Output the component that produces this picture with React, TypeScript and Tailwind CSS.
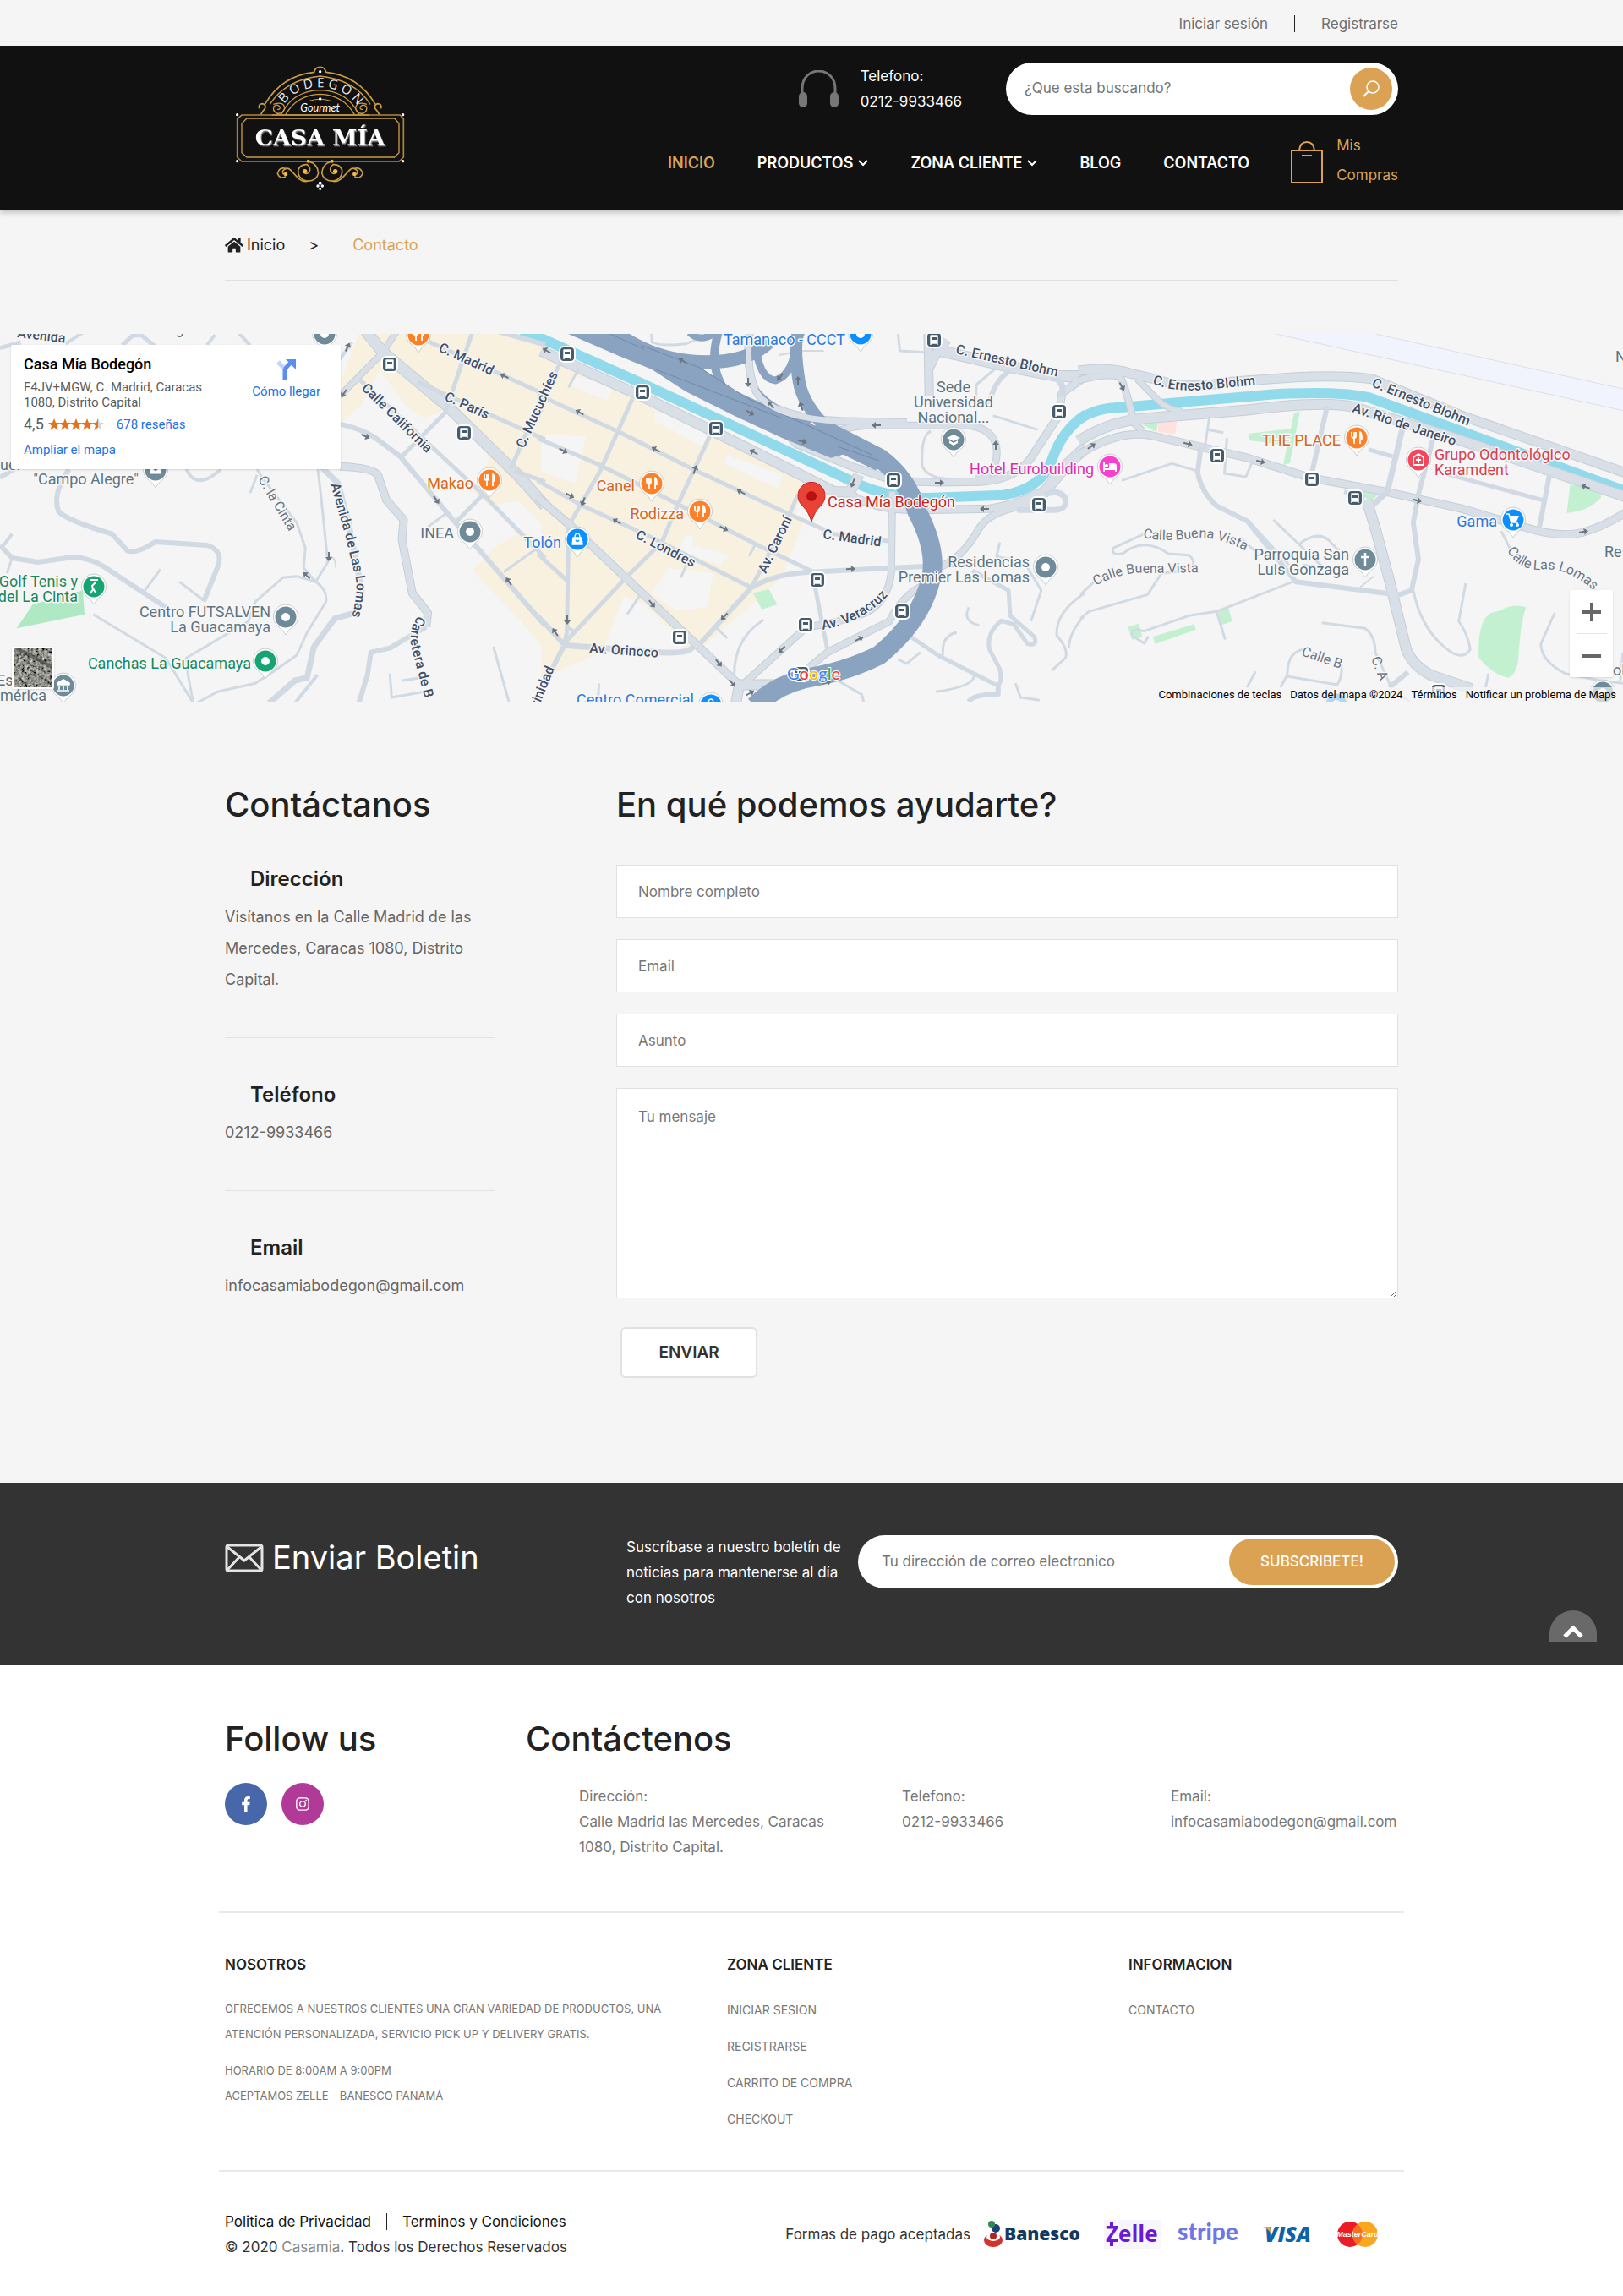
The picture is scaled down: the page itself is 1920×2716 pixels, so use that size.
import React from "react";
import { FaHome, FaFacebookF, FaInstagram } from "react-icons/fa";

/* ---------- Map data: three side-by-side tiles, each 1568 x 1350 units ---------- */

type Road = [width: number, d: string];

const tiles: {
  x: number;
  blocks: string[];
  clear: string[];
  parks: string[];
  roads: Road[];
}[] = [
  {
    x: 0,
    blocks: [
      "M1040,30H1568V520L1490,510L1420,470L1320,400L1180,290L1100,160L1050,280L990,345V190Z",
      "M1420,470L1568,520V1130L1480,1010L1370,870L1430,790L1500,740L1440,660L1370,590Z",
    ],
    clear: ["M1230,330L1290,300L1420,450L1380,500Z", "M1430,640L1500,620L1568,700V760L1500,720Z"],
    parks: ["M95,990L240,940L245,1025L48,1075Z"],
    roads: [
      [14, "M1060,20L1110,95L1300,290L1500,530L1580,640"],
      [8, "M1150,20L1110,95L985,250"],
      [5, "M1370,20L1290,310L1160,470"],
      [6, "M985,350Q1060,370 1100,410L1160,465L1320,700L1580,1065"],
      [5, "M1040,190L1400,600L1580,825"],
      [5, "M1210,200L1580,405"],
      [5, "M1230,50L1580,245"],
      [5, "M1580,230L1480,510"],
      [6, "M1440,20L1580,68"],
      [5, "M1400,600L1320,700"],
      [3, "M1290,670L1240,715"],
      [3, "M1580,770L1460,875"],
      [5, "M1490,515L1580,555"],
      [10, "M985,500Q1080,505 1095,530L1120,620L1170,690L1165,760L1195,950L1240,1020L1235,1070"],
      [6, "M1235,1070L1185,1105L1130,1145L1075,1160L1065,1240L1040,1340"],
      [7, "M930,500L980,560L1010,700L1050,950L1030,1020L970,1040L910,1140L890,1250L855,1260L780,1340"],
      [4, "M920,1240L855,1340"],
      [3, "M920,500L930,600L950,840L915,910L860,890L820,895L740,980L720,1050L540,1180L545,1240L560,1340"],
      [3, "M915,910Q950,940 945,980L890,1090L860,1170L790,1230L740,1270L630,1300L570,1340"],
      [3, "M740,500L760,540L860,700L885,790L880,860L915,910"],
      [3, "M745,530L725,595"],
      [4, "M540,510Q570,590 640,510"],
      [2, "M950,820Q975,820 973,860"],
      [6, "M200,510Q150,600 170,660Q190,690 325,740L370,800Q400,810 450,768L600,780Q650,800 630,860L590,980"],
      [6, "M0,780L35,825L110,840L210,822Q260,825 300,855L480,1000"],
      [4, "M35,740L10,780"],
      [3, "M35,825L20,880"],
      [3, "M465,865L420,940"],
      [3, "M520,910L590,975"],
      [3, "M270,1025L480,1180L560,1340"],
      [3, "M1430,1140L1475,1335"],
      [3, "M1130,1235L1135,1320L1230,1300"],
      [3, "M1165,1260L1220,1250"],
      [5, "M0,80L60,60"],
      [4, "M190,65L240,25"],
      [5, "M355,70L385,35L410,35L450,75"],
      [4, "M600,70L625,30M690,25L725,70"],
      [4, "M1020,60L985,120"],
      [6, "M0,540L40,510"],
    ],
  },
  {
    x: 640,
    blocks: ["M0,60L60,120L250,250L500,390L770,560L730,680L760,700L700,890L620,980L470,1140L180,1160L60,1220L0,1260Z"],
    clear: [
      "M20,385L130,395L100,560L0,520V420Z",
      "M100,180L210,215L190,265L90,215Z",
      "M330,300L480,385L470,430L330,340Z",
      "M540,460L700,530L690,580L530,490Z",
      "M420,740L440,750L440,780L545,815L520,850L400,800Z",
      "M370,860L500,880L480,1000L390,1010L320,950Z",
      "M240,960L300,990L420,1130L400,1150H180Z",
    ],
    parks: ["M615,950L660,935L685,990L640,1008Z"],
    roads: [
      [10, "M605,20Q590,200 640,260Q700,330 870,340L1060,345"],
      [9, "M850,380Q900,355 960,355H1240Q1330,370 1320,470Q1310,540 1260,545"],
      [13, "M0,90L290,250L540,400L850,590H880Q900,600 920,530"],
      [10, "M900,600Q960,655 1100,655L1300,650Q1400,630 1440,590"],
      [10, "M670,330L740,420L900,500L1010,545Q1080,560 1230,555Q1370,560 1420,470L1500,320L1510,240L1568,190"],
      [11, "M1122,20L1125,250"],
      [12, "M1175,50L1140,110L1125,150"],
      [14, "M1140,85L1370,150L1500,180L1580,180"],
      [6, "M1360,160Q1310,200 1300,280"],
      [7, "M1480,180Q1520,200 1510,250"],
      [3, "M1320,150L1262,210L1260,290"],
      [3, "M1035,30L1040,90L1110,95"],
      [2, "M690,105L760,90H820"],
      [3, "M320,30L322,60Q350,75 420,65L490,30"],
      [3, "M1130,375Q1100,390 1105,500Q1120,540 1180,545"],
      [3, "M1310,320L1440,370"],
      [5, "M265,260L170,520L85,700"],
      [5, "M490,390L395,640L350,770L250,890L65,1130"],
      [5, "M745,600L720,670L610,930"],
      [5, "M60,125L40,170L-10,330"],
      [5, "M-10,245L230,380L440,510L720,670L850,740L1005,765"],
      [5, "M-10,400L170,495L390,630L620,775L790,875"],
      [5, "M-10,550L120,640L300,740L610,930"],
      [10, "M-10,610L85,710L250,900L440,1120L570,1270"],
      [6, "M610,930Q680,880 780,875L1200,850"],
      [6, "M610,930L460,1130"],
      [7, "M440,1140Q430,1165 350,1160L65,1135"],
      [5, "M80,720L75,1090L65,1140"],
      [6, "M65,1140L-10,1320"],
      [4, "M75,1070L95,1085L65,1140"],
      [5, "M-10,810L75,905"],
      [6, "M-10,1030L65,1130"],
      [5, "M785,870L830,1150"],
      [9, "M1018,590L1015,880Q1005,980 940,1020Q850,1060 770,1070L580,1280"],
      [9, "M1150,900Q1050,940 1010,1050L830,1160L770,1220"],
      [13, "M565,1340L575,1275L700,1275"],
      [9, "M1150,860Q1220,830 1270,720Q1300,660 1400,640"],
      [14, "M1390,640L1460,590L1520,500L1580,430"],
      [7, "M1380,655H1490Q1530,650 1518,610Q1500,580 1460,600"],
      [5, "M1030,1070L1150,1170L1310,1270Q1340,1290 1330,1220L1300,1150Q1290,1090 1335,1048L1370,1060L1410,1130Q1440,1140 1430,1105L1360,1030L1355,940L1250,870"],
      [6, "M1240,1335Q1250,1310 1325,1308L1325,1270"],
      [3, "M1330,770L1320,820L1400,840L1450,940L1420,1050"],
      [3, "M1240,1000Q1220,1050 1270,1065"],
      [3, "M1205,1090Q1160,1100 1165,1170"],
      [3, "M1575,950Q1490,1020 1495,1100Q1530,1150 1520,1180L1480,1225"],
      [3, "M1530,1145Q1530,1090 1575,1030"],
      [3, "M1100,1160L1060,1200L1035,1185"],
      [3, "M1255,1240Q1260,1280 1145,1300"],
      [3, "M860,1260L930,1310L935,1335"],
      [3, "M1375,1270L1390,1320L1445,1330"],
      [3, "M645,1045Q560,1110 560,1240"],
      [3, "M285,960L250,1025"],
      [3, "M510,1075L540,1110"],
      [3, "M425,840L405,895"],
      [3, "M620,780L603,818"],
      [3, "M110,150L80,220"],
      [3, "M168,1270L165,1335"],
    ],
  },
  {
    x: 1280,
    blocks: [],
    clear: [],
    parks: [
      "M485,383L610,366L598,425L485,408Z",
      "M615,310L632,306L602,490L583,495Z",
      "M175,352L220,345L215,378Z",
      "M805,583L865,595L832,628Z",
      "M1415,565Q1500,580 1505,610Q1470,660 1405,665Z",
      "M395,1010L425,1003L435,1050L400,1065Z",
      "M205,1105L325,1060L330,1080L212,1130Z",
      "M133,1070L165,1058L175,1105L145,1115Z",
      "M1215,1010Q1250,985 1287,1000Q1270,1060 1265,1180Q1260,1240 1235,1250Q1190,1240 1150,1180Q1145,1050 1185,1020Z",
    ],
    roads: [
      [12, "M-10,160Q80,145 140,170L210,190Q300,230 430,200L620,184Q750,175 840,190L1100,320L1580,525"],
      [9, "M-10,195Q60,170 110,180Q130,230 150,345L175,375"],
      [8, "M160,190L220,265Q250,300 290,305"],
      [13, "M-10,410Q80,340 180,330L480,300Q700,265 790,290L1080,400L1580,610"],
      [10, "M-10,460Q100,370 200,390L480,470L660,540L880,590L1100,650L1280,715Q1380,755 1450,735Q1520,710 1580,660"],
      [6, "M345,430L335,520Q345,590 390,640L480,695L620,910L880,950L920,955L955,940L975,830L960,700L975,600L1018,400"],
      [6, "M710,290L665,530"],
      [7, "M930,360L885,590L840,640"],
      [5, "M760,590L820,610"],
      [5, "M830,440L900,465"],
      [5, "M1020,515L1335,620"],
      [6, "M1355,530L1325,720"],
      [13, "M825,620L850,720L890,900L940,1150Q960,1210 1010,1240L1130,1290"],
      [3, "M960,940Q980,1060 1040,1130Q1100,1200 1125,1150Q1120,1100 1092,1050L1112,915"],
      [3, "M370,320L355,440M365,370L410,380"],
      [3, "M420,400L413,525L475,537L495,480"],
      [3, "M115,550L260,490L330,515"],
      [3, "M610,910L390,1015L310,1030L180,1085Q140,1070 145,1100L180,1128L193,1103"],
      [3, "M390,1015L415,1115"],
      [3, "M555,690L700,860L640,850"],
      [3, "M480,690L600,850"],
      [3, "M630,775Q690,720 725,775L745,800"],
      [3, "M180,740L90,790Q85,820 120,808Q180,750 250,810L310,815Q340,850 300,870L230,880L190,955L20,1015L-5,1040"],
      [3, "M460,755L510,810M-5,955L35,910"],
      [3, "M695,1055L820,1075Q850,1100 850,1160L895,1280"],
      [6, "M945,1230L890,1285"],
      [3, "M640,1150Q595,1160 595,1240L575,1285M595,1245L740,1275Q758,1240 750,1190"],
      [3, "M503,1228L478,1285"],
      [3, "M1370,1020L1330,1130Q1330,1190 1400,1235L1500,1260L1568,1270M1568,1160L1560,1260"],
      [3, "M1215,730L1240,790M1475,905L1487,945"],
      [2, "M845,890L805,930"],
      [3, "M1178,1235L1170,1285"],
      [3, "M930,1320L950,1335"],
    ],
  },
];

const water = [
  { x: 640, d: "M-60,25L0,45L300,210L900,552Q1000,612 1120,612L1340,602Q1450,580 1480,480Q1510,370 1580,315" },
  { x: 1280, d: "M-10,335Q40,290 120,290L560,244Q740,232 830,255L1580,590" },
];

const highways: Road[] = [
  [23, "M820,370L980,470Q1060,540 1090,660Q1150,800 1130,900Q1100,1050 980,1170Q900,1220 800,1245Q690,1265 620,1350"],
  [18, "M420,195L620,305L820,395L980,490"],
  [16, "M210,20Q330,130 480,130Q600,130 660,60"],
  [8, "M430,25Q460,60 500,30"],
  [10, "M515,20Q490,120 515,190Q540,270 640,340"],
  [15, "M748,20Q730,60 748,200Q760,290 850,390"],
  [9, "M622,60Q630,190 680,195Q720,180 735,100"],
  [7, "M620,225Q680,310 780,350"],
];

type Pin = [x: number, y: number, color: string, glyph: string];
const SLATE = "#6f8a98";
const ORANGE = "#ff8127";
const GREEN = "#16a571";
const BLUE = "#0d90ff";
const pins: Pin[] = [
  [184, 161, SLATE, "mail"],
  [384, 0, SLATE, "dot"],
  [495, 1, ORANGE, "food"],
  [579, 173, ORANGE, "food"],
  [556, 234, SLATE, "dot"],
  [111, 299, GREEN, "golf"],
  [338, 335, SLATE, "dot"],
  [314, 387, GREEN, "dot"],
  [75, 416, SLATE, "museum"],
  [771, 177, ORANGE, "food"],
  [828, 210, ORANGE, "food"],
  [683, 243, BLUE, "bag"],
  [1128, 125, SLATE, "school"],
  [1237, 276, SLATE, "dot"],
  [1018, 0, BLUE, "dot"],
  [841, 439, BLUE, "bag"],
  [1313, 157, "#fb3fd0", "bed"],
  [1605, 123, ORANGE, "food"],
  [1678, 149, "#f4475b", "clinic"],
  [1790, 220, BLUE, "cart"],
  [1615, 267, SLATE, "cross"],
  [1896, 424, SLATE, "dot"],
  [1581, 438, BLUE, "dot"],
];

const glyphs: Record<string, React.ReactNode> = {
  dot: <circle r="5" fill="#fff" />,
  food: <path d="M-6,-7V-2Q-6,0 -3,0Q-1,0 -1,-2V-7M-3,-7V7M4,7V-7Q6,-6 6,1H4" stroke="#fff" strokeWidth="1.8" fill="none" />,
  bag: (
    <g stroke="#fff" strokeWidth="1.4">
      <path d="M-5,-2H5L6,6H-6Z" fill="#fff" />
      <path d="M-3,-2Q-3,-7 0,-7Q3,-7 3,-2" fill="none" />
      <path d="M-2,1Q0,4 2,1" fill="none" stroke={BLUE} />
    </g>
  ),
  mail: <path d="M-7,-5H7V5H-7ZM-7,-5L0,1L7,-5" stroke={SLATE} strokeWidth="1" fill="#fff" />,
  golf: <path d="M-4,-8H5M2,-5L-2,-1L-1,3L-4,8M-1,2L2,7M5,7V8" stroke="#fff" strokeWidth="2" fill="none" />,
  museum: <path d="M0,-7L7,-3V-1H-7V-3ZM-5,0V5M0,0V5M5,0V5M-7,6H7" stroke="#fff" strokeWidth="1.6" fill="#fff" />,
  school: <path d="M0,-6L8,-2L0,2L-8,-2ZM-5,1V4L0,7L5,4V1L0,4Z" fill="#fff" />,
  bed: (
    <g>
      <path d="M-7,-6V6M-7,3H7M7,6V0" stroke="#fff" strokeWidth="2" fill="none" />
      <path d="M-1,-4H5Q8,-4 8,0V2H-1Z" fill="#fff" />
      <circle cx="-4" cy="-1" r="2" fill="#fff" />
    </g>
  ),
  clinic: <path d="M-6,6V-3L0,-7L6,-3V6ZM0,-3V4M-3,0H3" stroke="#fff" strokeWidth="1.8" fill="none" />,
  cart: (
    <g fill="#fff">
      <path d="M-5,-5H7L4,2H-3Z" />
      <path d="M-8,-7H-5L-2,3H6" fill="none" stroke="#fff" strokeWidth="1.6" />
      <circle cx="-2" cy="6" r="2" />
      <circle cx="5" cy="6" r="2" />
    </g>
  ),
  cross: <path d="M0,-8V8M-5,-3H5" stroke="#fff" strokeWidth="2.4" fill="none" />,
};

const stops: [number, number][] = [
  [461, 36], [549, 117], [671, 24], [760, 69], [847, 112], [1105, 7], [1253, 92], [1057, 173],
  [1229, 202], [967, 291], [953, 344], [1067, 328], [804, 359], [948, 402], [1440, 144],
  [1552, 172], [1603, 194], [1702, 423],
];

const arrows: [number, number, number][] = [
  [411, 16, -65], [407, 70, 125], [432, 121, 25], [516, 196, 55], [389, 263, 90], [363, 286, -135], [597, 50, -155], [602, 293, -125],
  [647, 20, -150], [686, 93, -150], [666, 138, 28], [776, 137, -150], [674, 191, 28], [690, 198, 110], [822, 161, -70], [730, 222, -150],
  [877, 187, -150], [856, 230, 28], [892, 140, -150], [771, 319, 50], [671, 338, 90], [657, 353, -125], [850, 389, 50], [866, 413, 50],
  [857, 334, 135], [925, 373, 135], [1016, 361, -25], [1006, 278, -3], [808, 32, -150], [887, 93, 30], [885, 57, 90], [923, 51, 130],
  [944, 56, -90], [912, 84, -130], [948, 86, -110], [949, 127, 15], [1037, 108, 180], [1178, 132, -90], [1111, 176, 0], [1165, 207, 180],
  [1009, 176, 110], [1327, 62, 60], [1291, 133, -35], [1405, 130, 15], [1491, 151, 15], [1676, 197, 15], [1876, 181, -160], [1873, 234, -10],
  [887, 425, -30], [978, 412, -20],
];

type Label = [x: number, y: number, anchor: "start" | "middle" | "end", color: string, text: string];
const G = "#5c7482";
const labels: Label[] = [
  [363, 0, "end", G, "Colegio Mater Salvatore"],
  [0, 161, "start", G, "ue."],
  [164, 178, "end", G, "\"Campo Alegre\""],
  [560, 183, "end", "#d8661b", "Makao"],
  [537, 242, "end", G, "INEA"],
  [92, 299, "end", "#168a5c", "Golf Tenis y"],
  [92, 317, "end", "#168a5c", "del La Cinta"],
  [320, 335, "end", G, "Centro FUTSALVEN"],
  [320, 353, "end", G, "La Guacamaya"],
  [297, 396, "end", "#168a5c", "Canchas La Guacamaya"],
  [-4, 416, "start", G, "Es"],
  [55, 434, "end", G, "América"],
  [664, 253, "end", "#2c78dd", "Tolón"],
  [751, 186, "end", "#d8661b", "Canel"],
  [809, 219, "end", "#d8661b", "Rodizza"],
  [1000, 13, "end", "#2c78dd", "Tamanaco - CCCT"],
  [821, 439, "end", "#2c78dd", "Centro Comercial"],
  [1128, 69, "middle", G, "Sede"],
  [1128, 87, "middle", G, "Universidad"],
  [1128, 105, "middle", G, "Nacional..."],
  [1218, 276, "end", G, "Residencias"],
  [1218, 294, "end", G, "Premier Las Lomas"],
  [1294, 166, "end", "#dd2bb0", "Hotel Eurobuilding"],
  [1586, 132, "end", "#d8661b", "THE PLACE"],
  [1697, 149, "start", "#dc3c50", "Grupo Odontológico"],
  [1697, 167, "start", "#dc3c50", "Karamdent"],
  [1771, 228, "end", "#2c78dd", "Gama"],
  [1596, 267, "end", G, "Parroquia San"],
  [1596, 285, "end", G, "Luis Gonzaga"],
  [1911, 33, "start", G, "N"],
  [1898, 264, "start", G, "Res"],
  [1908, 404, "start", G, "ol"],
];

const streets: [id: string, d: string, text: string, minor?: boolean][] = [
  ["s1", "M518,20L600,58", "C. Madrid"],
  ["s2", "M525,78L600,112", "C. París"],
  ["s3", "M427,65L530,166", "Calle California"],
  ["s4", "M620,136L668,30", "C. Mucuchíes"],
  ["s5", "M305,172L352,250", "C. la Cinta", true],
  ["s6", "M391,178L408,237L421,290Q424,310 412,350", "Avenida de Las Lomas"],
  ["s7", "M495,333Q482,350 487,372L510,460", "Carretera de B"],
  ["s8", "M634,450L668,365", "Trinidad"],
  ["s9", "M751,241L830,282", "C. Londres"],
  ["s10", "M906,284L945,202", "Av. Caroní"],
  ["s11", "M973,242L1060,254", "C. Madrid"],
  ["s12", "M973,350Q1030,340 1062,295", "Av. Veracruz"],
  ["s13", "M697,377L800,384", "Av. Orinoco"],
  ["s14", "M1130,23L1270,55", "C. Ernesto Blohm"],
  ["s15", "M1363,59Q1390,69 1425,66L1510,58", "C. Ernesto Blohm"],
  ["s16", "M1622,62L1760,118", "C. Ernesto Blohm"],
  ["s17", "M1599,92L1750,142", "Av. Río de Janeiro"],
  ["s18", "M1352,241Q1380,247 1415,241Q1445,240 1480,260", "Calle Buena Vista", true],
  ["s19", "M1296,298Q1330,280 1360,283L1430,282", "Calle Buena Vista", true],
  ["s20", "M1783,256Q1795,278 1820,279Q1855,274 1890,308", "Calle Las Lomas", true],
  ["s21", "M1539,380L1600,401", "Calle B", true],
  ["s22", "M1622,384L1640,430", "C. A", true],
  ["s23", "M20,4L90,12", "Avenida"],
];

const tileTransform = (x: number) => `translate(${x},-10) scale(0.40816,0.33333)`;

function StreetMap() {
  return (
    <svg
      role="img"
      aria-label="Mapa de Caracas"
      viewBox="0 0 1920 435"
      preserveAspectRatio="xMidYMid slice"
      className="h-full w-full font-['Roboto',sans-serif]"
      fill="none"
      strokeLinejoin="round"
    >
      {tiles.map((t) => (
        <g key={t.x} transform={tileTransform(t.x)}>
          {t.blocks.map((d) => <path key={d} d={d} fill="#f8f1df" />)}
          {t.clear.map((d) => <path key={d} d={d} fill="#f5f5f5" />)}
          {t.parks.map((d) => <path key={d} d={d} fill={t.x ? "#c4f0d2" : "#aee9c3"} />)}
        </g>
      ))}
      <g transform={tileTransform(1280)}>
        <path d="M560,30H850L1568,225V302Z" fill="#f2f4fd" />
        <path d="M560,30L1568,302M850,30L1568,225" stroke="#dddfe8" strokeWidth="1" vectorEffect="non-scaling-stroke" />
        <path d="M220,345L275,340L270,385L220,378Z" fill="#ffe2de" />
      </g>
      {water.map((w) => (
        <g key={w.x} transform={tileTransform(w.x)}>
          <path d={w.d} stroke="#90daec" strokeWidth="12" vectorEffect="non-scaling-stroke" />
        </g>
      ))}
      {tiles.map((t) => (
        <g key={t.x} transform={tileTransform(t.x)}>
          {t.roads.filter(([w]) => w > 7).map(([w, d]) => (
            <path key={d} d={d} stroke="#c5ced7" strokeWidth={w} vectorEffect="non-scaling-stroke" />
          ))}
          {t.roads.map(([w, d]) => (
            <path key={d} d={d} stroke={w > 7 ? "#d8dfe6" : "#d1dae3"} strokeWidth={w > 7 ? w - 2 : w} vectorEffect="non-scaling-stroke" />
          ))}
        </g>
      ))}
      <g transform={tileTransform(640)}>
        <path d="M60,20H235L300,80L420,115L560,230L720,320L830,375L900,450L840,470L700,400L560,320L420,235L320,155L230,110Z" fill="#8aa3c1" />
        {highways.map(([w, d]) => (
          <path key={d} d={d} stroke="#8aa3c1" strokeWidth={w} vectorEffect="non-scaling-stroke" />
        ))}
        <path d="M290,70L460,150L600,260L800,370L960,460M330,155L700,330M200,30L300,85M860,430L980,480" stroke="#7189ab" strokeWidth="1" vectorEffect="non-scaling-stroke" />
        <path d="M605,20Q590,200 640,260Q700,330 870,340" stroke="#d8dfe6" strokeWidth="7" vectorEffect="non-scaling-stroke" />
      </g>
      {arrows.map(([x, y, r]) => (
        <g key={`${x}-${y}`} transform={`translate(${x},${y}) rotate(${r})`}>
          <path d="M-5,0H3" stroke="#6d7680" strokeWidth="2" />
          <path d="M1,-4L6,0L1,4Z" fill="#6d7680" />
        </g>
      ))}
      {stops.map(([x, y]) => (
        <g key={`${x}-${y}`} transform={`translate(${x},${y})`}>
          <rect x="-9" y="-9" width="18" height="18" rx="5" fill="#465b6c" stroke="#fff" strokeWidth="2" />
          <path d="M-4,-5H4V4H-4ZM-4,3V6M4,3V6" fill="#fff" stroke="#fff" strokeWidth="1.4" />
          <path d="M-3,-3H3V0H-3Z" fill="#465b6c" />
        </g>
      ))}
      {streets.map(([id, d, text, minor]) => (
        <React.Fragment key={id}>
          <path id={id} d={d} />
          <text
            fontSize="16"
            fontWeight={minor ? 400 : 500}
            fill={minor ? "#6b7684" : "#41506a"}
            stroke="#f5f5f5"
            strokeWidth="3"
            paintOrder="stroke"
          >
            <textPath href={`#${id}`}>{text}</textPath>
          </text>
        </React.Fragment>
      ))}
      {pins.map(([x, y, color, glyph]) => (
        <g key={`${x}-${y}`} transform={`translate(${x},${y})`}>
          <path d="M0,21Q-4,14 -9,11A14.500,14.500 0 1 1 9,11Q4,14 0,21Z" fill="#fff" stroke="#c9ced3" strokeWidth="1" />
          <circle r="12.500" fill={color} />
          {glyphs[glyph]}
        </g>
      ))}
      {labels.map(([x, y, anchor, color, text]) => (
        <text key={`${x}-${y}`} x={x} y={y} textAnchor={anchor} fontSize="18" fill={color} stroke="#f7f7f7" strokeWidth="3" paintOrder="stroke">
          {text}
        </text>
      ))}
      <path d="M960,222Q957,211 949,203A16,16 0 1 1 971,203Q963,211 960,222Z" fill="#ea4335" stroke="#c5221f" strokeWidth="1" />
      <circle cx="960" cy="192" r="6" fill="#b31412" />
      <text x="979" y="205" fontSize="18" fill="#c5221f" stroke="#f7f7f7" strokeWidth="3" paintOrder="stroke">
        Casa Mía Bodegón
      </text>
      <text x="931" y="409" fontSize="20" fontWeight="500" stroke="#fff" strokeWidth="2" paintOrder="stroke" className="font-['Lato',sans-serif]">
        <tspan fill="#4285f4">G</tspan>
        <tspan fill="#ea4335">o</tspan>
        <tspan fill="#fbbc05">o</tspan>
        <tspan fill="#4285f4">g</tspan>
        <tspan fill="#34a853">l</tspan>
        <tspan fill="#ea4335">e</tspan>
      </text>
    </svg>
  );
}

function Stars() {
  const star = "M8,1L10,6H15L11,9.500L12.500,15L8,11.500L3.500,15L5,9.500L1,6H6Z";
  return (
    <svg viewBox="0 0 68 16" className="h-4 w-[68px]" role="img" aria-label="4,5 estrellas">
      {[0, 13, 26, 39].map((x) => (
        <path key={x} d={star} transform={`translate(${x},0)`} fill="#e7711b" />
      ))}
      <g transform="translate(52,0)">
        <path d={star} fill="#d5d5dc" />
        <path d="M8,1V11.500L3.500,15L5,9.500L1,6H6Z" fill="#e7711b" />
      </g>
    </svg>
  );
}

function MapSection() {
  return (
    <section className="relative h-[435px] overflow-hidden font-['Roboto',sans-serif]">
      <StreetMap />
      <div className="absolute top-[13px] left-[13px] flex h-[147px] w-[390px] justify-between rounded-xs bg-white pt-[14px] pr-6 pl-[15px] text-[15px] leading-[18px] shadow">
        <div>
          <h2 className="text-[18px] leading-[18px] font-medium text-black">Casa Mía Bodegón</h2>
          <p className="mt-[9px] text-[#5b5b5b]">
            F4JV+MGW, C. Madrid, Caracas
            <br />
            1080, Distrito Capital
          </p>
          <p className="mt-2 flex items-center text-[#5b5b5b]">
            <span className="text-[18px]">4,5</span>
            <span className="ml-1"><Stars /></span>
            <a href="#resenas" className="ml-[14px] text-[#1a73e8]">678 reseñas</a>
          </p>
          <a href="#ampliar" className="mt-3 block text-[#1a73e8]">Ampliar el mapa</a>
        </div>
        <a href="#llegar" className="flex flex-col items-center text-[#1a73e8]">
          <svg viewBox="0 0 24 26" className="mt-[2px] h-[26px] w-6" aria-hidden="true">
            <path d="M2,4L10,13" stroke="#c3d4fb" strokeWidth="5" />
            <path d="M10,26V16Q10,12 13,9L17,5" fill="none" stroke="#5b8df6" strokeWidth="5" />
            <path d="M11,1H23V13Z" fill="#5b8df6" />
          </svg>
          <span className="mt-1">Cómo llegar</span>
        </a>
      </div>
      <button type="button" aria-label="Vista satélite" className="absolute top-[370px] left-[14px] h-[50px] w-[50px] overflow-hidden rounded-xs border-2 border-white shadow">
        <svg viewBox="0 0 46 46" className="h-full w-full" aria-hidden="true">
          <filter id="aerial">
            <feTurbulence type="fractalNoise" baseFrequency="0.3" numOctaves="3" seed="4" />
            <feColorMatrix values="0.9 0.6 0 0 -0.48  0.9 0.6 0 0 -0.48  0.9 0.6 0 0 -0.5  0 0 0 0 1" />
          </filter>
          <rect width="46" height="46" filter="url(#aerial)" />
          <path d="M4,0L46,22" stroke="#4a4e48" strokeWidth="4" opacity="0.7" />
        </svg>
      </button>
      <div className="absolute top-[303px] right-3 flex w-[51px] flex-col items-center rounded-xs bg-white shadow">
        <button type="button" aria-label="Acercar" className="flex h-[51px] w-full items-center justify-center">
          <svg viewBox="0 0 22 22" className="size-[22px]" aria-hidden="true"><path d="M11,0V22M0,11H22" stroke="#666" strokeWidth="4" /></svg>
        </button>
        <span className="h-px w-9 bg-[#e6e6e6]" />
        <button type="button" aria-label="Alejar" className="flex h-[51px] w-full items-center justify-center">
          <svg viewBox="0 0 22 22" className="size-[22px]" aria-hidden="true"><path d="M0,11H22" stroke="#666" strokeWidth="4" /></svg>
        </button>
      </div>
      <div className="absolute right-0 bottom-0 flex gap-[10px] bg-[#f5f5f5]/70 px-2 text-[13px] leading-[17px] text-black">
        <button type="button">Combinaciones de teclas</button>
        <span>Datos del mapa ©2024</span>
        <a href="#terminos-mapa">Términos</a>
        <a href="#problema">Notificar un problema de Maps</a>
      </div>
    </section>
  );
}

/* ---------- Brand marks ---------- */

function Logo() {
  return (
    <svg viewBox="0 0 660 480" className="h-40 w-[220px]" role="img" aria-label="Bodegón Gourmet Casa Mía" fill="none" stroke="#c99b45" strokeWidth="5">
      <path d="M48,198H610L622,212V348L606,363H48L32,348V212Z" stroke="#b0863a" />
      <path d="M66,210H590L606,228V332L590,348H66L48,332V228Z" strokeWidth="4" />
      <path d="M130,160Q190,58 305,46Q308,28 326,28Q344,28 347,46Q462,58 522,160" />
      <path d="M148,160Q205,72 326,60Q447,72 504,160" strokeWidth="4" />
      <path d="M188,196Q230,112 326,110Q422,112 464,196" strokeWidth="4" />
      <path d="M204,196Q245,126 326,124Q407,126 448,196" strokeWidth="4" />
      <path d="M110,175Q106,158 122,158Q136,162 130,176Q122,184 116,196M542,175Q546,158 530,158Q516,162 522,176Q530,184 536,196" />
      <path d="M155,198H498" />
      <path d="M160,160Q200,148 200,176Q194,196 172,192Q156,182 162,168Q174,156 184,170Q184,180 174,178M492,160Q452,148 452,176Q458,196 480,192Q496,182 490,168Q478,156 468,170Q468,180 478,178" strokeWidth="4" />
      <path d="M288,148Q326,136 364,148" strokeWidth="3" />
      <path d="M284,362Q318,372 320,404Q314,434 278,432Q246,424 248,394Q256,372 280,374Q296,386 286,402Q276,412 268,400" />
      <path d="M368,362Q334,372 332,404Q338,434 374,432Q406,424 404,394Q396,372 372,374Q356,386 366,402Q376,412 384,400" />
      <path d="M205,408Q190,410 194,396Q208,380 222,394L250,424Q268,438 284,432M447,408Q462,410 458,396Q444,380 430,394L402,424Q384,438 368,432" />
      <path d="M205,388Q180,382 175,406Q184,428 204,416M447,388Q472,382 477,406Q468,428 448,416" />
      <g fill="#f0b94e" stroke="none">
        <circle cx="284" cy="362" r="6" /><circle cx="368" cy="362" r="6" />
        <circle cx="272" cy="398" r="8" /><circle cx="380" cy="398" r="8" />
        <circle cx="204" cy="408" r="7" /><circle cx="448" cy="408" r="7" />
      </g>
      <g fill="#fff" stroke="none">
        <circle cx="32" cy="197" r="5" /><circle cx="620" cy="197" r="5" />
        <circle cx="32" cy="362" r="5" /><circle cx="620" cy="362" r="5" />
        <circle cx="326" cy="44" r="5" /><circle cx="326" cy="141" r="5" />
        <circle cx="326" cy="440" r="6" /><circle cx="318" cy="450" r="5" /><circle cx="334" cy="450" r="5" /><circle cx="326" cy="460" r="5" />
      </g>
      <path id="logo-arc" d="M202,154Q246,100 326,100Q406,100 456,160" stroke="none" />
      <text stroke="none" fill="#e8e8ee" fontSize="46" className="font-['Open_Sans',sans-serif]">
        <textPath href="#logo-arc" startOffset="50%" textAnchor="middle">B O D E G O N</textPath>
      </text>
      <text x="326" y="185" textAnchor="middle" stroke="none" fill="#fff" fontSize="38" fontStyle="italic" className="font-['Lato',sans-serif]">Gourmet</text>
      <text x="326" y="306" textAnchor="middle" stroke="none" fill="#fff" fontSize="80" fontWeight="700" className="font-['DejaVu_Serif',serif] [filter:drop-shadow(3px_4px_0_#8b8b8b)]">CASA MÍA</text>
    </svg>
  );
}

function ChevronDown() {
  return (
    <svg viewBox="0 0 12 8" className="h-2 w-3" fill="none" stroke="currentColor" strokeWidth="2" aria-hidden="true">
      <path d="M1,1L6,6L11,1" />
    </svg>
  );
}

function PaymentLogos() {
  return (
    <div className="flex items-center">
      <svg viewBox="0 0 118 34" className="h-[34px] w-[118px]" role="img" aria-label="Banesco">
        <ellipse cx="11" cy="24" rx="11" ry="8" fill="#d0342c" />
        <ellipse cx="11" cy="20" rx="8" ry="5" fill="#fff" />
        <circle cx="11" cy="19" r="4" fill="#b3241f" />
        <circle cx="14" cy="10" r="5" fill="#1f3f77" />
        <circle cx="9" cy="5" r="4" fill="#2f8a4d" />
        <text x="24" y="24" fontSize="21" fontWeight="800" fill="#12395f" className="font-['Open_Sans',sans-serif]">Banesco</text>
      </svg>
      <svg viewBox="0 0 68 34" className="ml-6 h-[34px] w-[68px]" role="img" aria-label="Zelle">
        <rect width="68" height="34" fill="#f8f6fc" />
        <text x="2" y="26" fontSize="26" fontWeight="700" fill="#6a1bd2" className="font-['Open_Sans',sans-serif]">Zelle</text>
        <path d="M9,3V9M9,25V31" stroke="#6a1bd2" strokeWidth="4" />
      </svg>
      <svg viewBox="0 0 80 34" className="ml-[18px] h-[34px] w-20" role="img" aria-label="Stripe">
        <text x="1" y="24" fontSize="28" fontWeight="900" fill="#6f76e8" className="font-['Lato',sans-serif]">stripe</text>
      </svg>
      <svg viewBox="0 0 60 24" className="ml-[21px] h-6 w-[60px]" role="img" aria-label="Visa">
        <text x="3" y="21" fontSize="25" fontWeight="800" fontStyle="italic" fill="#0d63a8" className="font-['Open_Sans',sans-serif]">VISA</text>
        <path d="M1,3H9L11,12Q7,5 1,3Z" fill="#e8a33d" />
      </svg>
      <svg viewBox="0 0 52 32" className="ml-[27px] h-8 w-[52px]" role="img" aria-label="MasterCard">
        <circle cx="17" cy="16" r="15" fill="#eb1c26" />
        <circle cx="35" cy="16" r="15" fill="#faa61f" />
        <path d="M26,4A15,15 0 0 1 26,28A15,15 0 0 1 26,4Z" fill="#f4701f" />
        <text x="26" y="19" textAnchor="middle" fontSize="9" fontWeight="700" fontStyle="italic" fill="#fff" className="font-['Liberation_Sans',sans-serif]">MasterCard</text>
      </svg>
    </div>
  );
}

/* ---------- Page sections ---------- */

const wrap = "mx-auto w-full max-w-[1402px] px-[7px]";

function Header() {
  return (
    <header>
      <div className="h-[55px]">
        <div className="h-[50px] border-b border-[#eeeeee] pt-[13px]">
          <div className={wrap}>
            <div className="flex items-center justify-end text-[17px] leading-[30px] text-[#6f6f6f]">
              <a href="#login">Iniciar sesión</a>
              <span className="mx-[31px] h-5 w-px bg-[#222]" />
              <a href="#registro">Registrarse</a>
            </div>
          </div>
        </div>
      </div>
      <div className="bg-[#111] shadow-[0_3px_6px_rgba(0,0,0,0.2)]">
        <div className={wrap}>
          <div className="flex items-start justify-between pt-[15px] pb-[19px]">
            <a href="#inicio" className="ml-1"><Logo /></a>
            <div className="flex flex-col items-end pt-1">
              <div className="flex items-center">
                <svg viewBox="0 0 49 44" className="h-11 w-[49px]" aria-hidden="true">
                  <path d="M5,30V22C5,-6 44,-6 44,22V30" fill="none" stroke="#777" strokeWidth="3" />
                  <rect x="1" y="26" width="10" height="18" rx="5" fill="#777" />
                  <rect x="38" y="26" width="10" height="18" rx="5" fill="#777" />
                </svg>
                <p className="ml-[25px] text-[17px] leading-[30px] text-white">
                  Telefono:
                  <br />
                  0212-9933466
                </p>
                <form className="ml-[52px] flex h-[62px] w-[464px] items-center rounded-full bg-white pr-[7px] pl-[22px]">
                  <input aria-label="Buscar" placeholder="¿Que esta buscando?" className="min-w-0 flex-1 bg-transparent text-[17px] text-black outline-none placeholder:text-[#757575]" />
                  <button type="button" aria-label="Buscar productos" className="flex size-[50px] items-center justify-center rounded-full bg-[#dba253]">
                    <svg viewBox="0 0 20 20" className="size-5" fill="none" stroke="#fff" strokeWidth="1.5" aria-hidden="true">
                      <circle cx="12" cy="8" r="7" />
                      <path d="M7,13L1,19" strokeWidth="2" />
                    </svg>
                  </button>
                </form>
              </div>
              <div className="mt-[19px] flex items-center">
                <nav className="flex items-center gap-[50px] pt-[6px] text-[18px] leading-[24px] font-semibold text-white">
                  <a href="#inicio" className="text-[#dba253]">INICIO</a>
                  <a href="#productos" className="flex items-center gap-[6px]">PRODUCTOS <ChevronDown /></a>
                  <a href="#zona" className="flex items-center gap-[6px]">ZONA CLIENTE <ChevronDown /></a>
                  <a href="#blog">BLOG</a>
                  <a href="#contacto">CONTACTO</a>
                </nav>
                <a href="#compras" className="ml-[49px] flex items-center gap-4 text-[17px] leading-[35px] text-[#dba253]">
                  <svg viewBox="0 0 38 50" className="mt-1 h-[50px] w-[38px]" fill="none" stroke="currentColor" strokeWidth="2" aria-hidden="true">
                    <path d="M1,11H37V49H1ZM10,11Q11,1 19,1Q27,1 28,11M13,17H25" />
                  </svg>
                  <span>Mis<br />Compras</span>
                </a>
              </div>
            </div>
          </div>
        </div>
      </div>
    </header>
  );
}

function Breadcrumb() {
  return (
    <div className={wrap}>
      <nav aria-label="Ruta" className="flex h-[83px] items-center border-b border-[#e0e0e0] text-[18px] leading-[24px] text-[#222]">
        <a href="#inicio" className="flex items-center gap-1"><FaHome className="h-5 w-[22px]" />Inicio</a>
        <span className="ml-7">&gt;</span>
        <span className="ml-10 text-[#dba253]">Contacto</span>
      </nav>
    </div>
  );
}

function InfoBlock({ title, children }: { title: string; children: React.ReactNode }) {
  return (
    <div className="border-b border-[#e3e3e3] pb-[50px] last:border-0 last:pb-0">
      <h3 className="pl-[30px] text-[24px] leading-[32px] font-semibold text-[#222]">{title}</h3>
      <p className="mt-[10px] text-[18px] leading-[37px] text-[#666]">{children}</p>
    </div>
  );
}

const heading = "text-[40px] leading-[50px] font-medium text-[#222]";
const field = "w-full border border-[#e1e1e1] bg-white px-[25px] text-[17px] text-black outline-none placeholder:text-[#777]";

function Contact() {
  return (
    <div className={wrap}>
      <div className="grid grid-cols-[319px_minmax(0,1fr)] gap-x-[144px] pt-[97px] pb-[124px]">
        <div>
          <h2 className={heading}>Contáctanos</h2>
          <div className="mt-[47px] flex flex-col gap-[51px]">
            <InfoBlock title="Dirección">Visítanos en la Calle Madrid de las Mercedes, Caracas 1080, Distrito Capital.</InfoBlock>
            <InfoBlock title="Teléfono">0212-9933466</InfoBlock>
            <InfoBlock title="Email">infocasamiabodegon@gmail.com</InfoBlock>
          </div>
        </div>
        <form>
          <h2 className={heading}>En qué podemos ayudarte?</h2>
          <div className="mt-[46px] flex flex-col gap-[25px]">
            <input aria-label="Nombre completo" placeholder="Nombre completo" className={`${field} h-[63px]`} />
            <input aria-label="Email" placeholder="Email" className={`${field} h-[63px]`} />
            <input aria-label="Asunto" placeholder="Asunto" className={`${field} h-[63px]`} />
            <textarea aria-label="Tu mensaje" placeholder="Tu mensaje" className={`${field} block h-[249px] resize-y py-[21px] leading-[24px]`} />
          </div>
          <button type="button" className="mt-[34px] ml-[5px] h-[60px] w-[162px] rounded-md border-2 border-[#e1e1e1] bg-white text-[19px] font-semibold text-[#333]">ENVIAR</button>
        </form>
      </div>
    </div>
  );
}

function Newsletter() {
  return (
    <section className="relative bg-[#333]">
      <div className={wrap}>
        <div className="flex items-start pt-[61px] pb-[64px] text-white">
          <div className="flex w-[475px] items-center">
            <svg viewBox="0 0 46 34" className="mt-[2px] h-[34px] w-[46px]" fill="none" stroke="#e4e4e4" strokeWidth="3" aria-hidden="true">
              <rect x="2" y="2" width="42" height="30" rx="2" />
              <path d="M3,4L23,20L43,4M3,31L17,16M43,31L29,16" />
            </svg>
            <h2 className="ml-[10px] text-[38px] leading-[54px]">Enviar Boletin</h2>
          </div>
          <p className="w-[274px] text-[17px] leading-[30px]">
            Suscríbase a nuestro boletín de
            <br />
            noticias para mantenerse al día
            <br />
            con nosotros
          </p>
          <form className="mt-px flex h-[63px] min-w-0 flex-1 items-center rounded-full bg-white pr-1 pl-7">
            <input type="email" aria-label="Correo electronico" placeholder="Tu dirección de correo electronico" className="min-w-0 flex-1 bg-transparent text-[17px] text-black outline-none placeholder:text-[#757575]" />
            <button type="button" className="h-[55px] w-[196px] rounded-full bg-[#dba253] text-[17px] font-medium text-white">SUBSCRIBETE!</button>
          </form>
        </div>
      </div>
      <button type="button" aria-label="Volver arriba" className="absolute right-[31px] bottom-[27px] h-[37px] w-14 overflow-hidden rounded-t-full bg-[#696969]">
        <svg viewBox="0 0 56 37" className="h-full w-full" fill="none" stroke="#fff" strokeWidth="5" aria-hidden="true">
          <path d="M18,31L28,21L38,31" />
        </svg>
      </button>
    </section>
  );
}

const columnTitle = "text-[17px] leading-[24px] font-semibold text-[#222]";

function Footer() {
  return (
    <footer className="bg-white">
      <div className={`${wrap} pt-[63px]`}>
        <div className="flex pb-[61px]">
          <div className="w-[356px]">
            <h2 className={heading}>Follow us</h2>
            <div className="mt-[27px] flex gap-[17px] text-white">
              <a href="#facebook" aria-label="Facebook" className="flex size-[50px] items-center justify-center rounded-full bg-[#4867aa]"><FaFacebookF className="size-[18px]" /></a>
              <a href="#instagram" aria-label="Instagram" className="flex size-[50px] items-center justify-center rounded-full bg-[#b13997]"><FaInstagram className="size-[18px]" /></a>
            </div>
          </div>
          <div className="min-w-0 flex-1">
            <h2 className={heading}>Contáctenos</h2>
            <div className="mt-7 flex pl-[63px] text-[17px] leading-[30px] text-[#777]">
              <p className="w-[382px]">Dirección:<br />Calle Madrid las Mercedes, Caracas<br />1080, Distrito Capital.</p>
              <p className="w-[318px]">Telefono:<br />0212-9933466</p>
              <p>Email:<br />infocasamiabodegon@gmail.com</p>
            </div>
          </div>
        </div>
      </div>
      <div className="mx-auto w-full max-w-[1402px] border-y-2 border-[#e9e9e9] px-[7px] pt-[49px] pb-[39px]">
        <div className="flex text-[#777]">
          <div className="w-[594px]">
            <h4 className={columnTitle}>NOSOTROS</h4>
            <div className="mt-[25px] text-[13px] leading-[30px]">
              <p>OFRECEMOS A NUESTROS CLIENTES UNA GRAN VARIEDAD DE PRODUCTOS, UNA<br />ATENCIÓN PERSONALIZADA, SERVICIO PICK UP Y DELIVERY GRATIS.</p>
              <p className="mt-[13px]">HORARIO DE 8:00AM A 9:00PM<br />ACEPTAMOS ZELLE - BANESCO PANAMÁ</p>
            </div>
          </div>
          <div className="w-[475px]">
            <h4 className={columnTitle}>ZONA CLIENTE</h4>
            <ul className="mt-5 text-[14px] leading-[43px]">
              {["INICIAR SESION", "REGISTRARSE", "CARRITO DE COMPRA", "CHECKOUT"].map((t) => (
                <li key={t}><a href="#zona">{t}</a></li>
              ))}
            </ul>
          </div>
          <div>
            <h4 className={columnTitle}>INFORMACION</h4>
            <a href="#contacto" className="mt-5 block text-[14px] leading-[43px]">CONTACTO</a>
          </div>
        </div>
      </div>
      <div className={wrap}>
        <div className="flex items-center justify-between pt-11 pb-[42px] text-[17px] leading-[30px] text-[#333]">
          <div>
            <p className="flex items-center text-[#111]">
              <a href="#privacidad">Politica de Privacidad</a>
              <span className="mx-[18px] h-5 w-px bg-[#222]" />
              <a href="#terminos">Terminos y Condiciones</a>
            </p>
            <p>© 2020 <a href="#casamia" className="text-[#888]">Casamia</a>. Todos los Derechos Reservados</p>
          </div>
          <div className="flex items-center gap-4 pr-[22px]">
            <span>Formas de pago aceptadas</span>
            <PaymentLogos />
          </div>
        </div>
      </div>
    </footer>
  );
}

export default function App() {
  return (
    <div className="bg-[#f5f5f5] font-['Inter',sans-serif]">
      <Header />
      <Breadcrumb />
      <div className="pt-[63px]">
        <MapSection />
      </div>
      <Contact />
      <Newsletter />
      <Footer />
    </div>
  );
}
